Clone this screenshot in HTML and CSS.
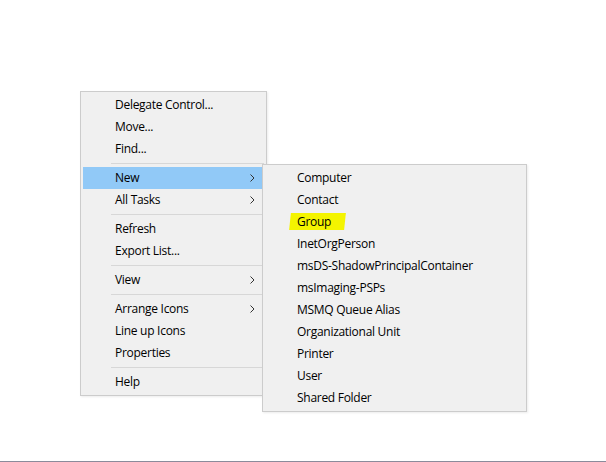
FILE: index.html
```html
<!DOCTYPE html>
<html>
<head>
<meta charset="utf-8">
<link rel="stylesheet" href="styles.css">
</head>
<body>
<div class="screen">
  <div class="menu main-menu">
    <div class="item">Delegate Control...</div>
    <div class="item">Move...</div>
    <div class="item">Find...</div>
    <div class="sep"></div>
    <div class="item active">New<svg class="chev" viewBox="0 0 5 8"><path d="M0.5 0.5 L4 4 L0.5 7.5" fill="none" stroke="#333" stroke-width="1"/></svg></div>
    <div class="item">All Tasks<svg class="chev" viewBox="0 0 5 8"><path d="M0.5 0.5 L4 4 L0.5 7.5" fill="none" stroke="#333" stroke-width="1"/></svg></div>
    <div class="sep"></div>
    <div class="item">Refresh</div>
    <div class="item">Export List...</div>
    <div class="sep"></div>
    <div class="item">View<svg class="chev" viewBox="0 0 5 8"><path d="M0.5 0.5 L4 4 L0.5 7.5" fill="none" stroke="#333" stroke-width="1"/></svg></div>
    <div class="sep"></div>
    <div class="item">Arrange Icons<svg class="chev" viewBox="0 0 5 8"><path d="M0.5 0.5 L4 4 L0.5 7.5" fill="none" stroke="#333" stroke-width="1"/></svg></div>
    <div class="item">Line up Icons</div>
    <div class="item">Properties</div>
    <div class="sep"></div>
    <div class="item">Help</div>
  </div>
  <div class="menu sub-menu">
    <div class="item">Computer</div>
    <div class="item">Contact</div>
    <div class="item"><span class="marked">Group</span></div>
    <div class="item">InetOrgPerson</div>
    <div class="item">msDS-ShadowPrincipalContainer</div>
    <div class="item">msImaging-PSPs</div>
    <div class="item">MSMQ Queue Alias</div>
    <div class="item">Organizational Unit</div>
    <div class="item">Printer</div>
    <div class="item">User</div>
    <div class="item">Shared Folder</div>
  </div>
</div>
</body>
</html>
```
FILE: styles.css
```css
html, body {
  margin: 0;
  padding: 0;
  background: #ffffff;
}
.screen {
  position: relative;
  width: 606px;
  height: 461px;
  border-bottom: 1px solid #8b8b9b;
  font-family: "Segoe UI", "Open Sans", "Noto Sans", sans-serif;
  font-size: 12px;
  letter-spacing: -0.28px;
  color: #000;
}
.menu {
  position: absolute;
  background: #f0f0f0;
  border: 1px solid #cccccc;
  padding: 2px;
  box-sizing: border-box;
  display: flex;
  flex-direction: column;
  box-shadow: 1px 1px 2px rgba(0,0,0,0.08);
}
.main-menu {
  left: 80px;
  top: 91px;
  width: 187px;
}
.sub-menu {
  left: 262px;
  top: 164px;
  width: 265px;
  z-index: 2;
}
.item {
  position: relative;
  height: 22px;
  line-height: 22px;
  padding-left: 32px;
  display: flex;
  align-items: center;
  white-space: nowrap;
}
.item.active {
  background: #91c9f7;
}
.chev {
  position: absolute;
  right: 9px;
  top: 7px;
  width: 5px;
  height: 8px;
}
.sep {
  height: 7px;
  margin-left: 28px;
  display: flex;
  align-items: center;
}
.sep::after {
  content: "";
  display: block;
  width: 100%;
  height: 1px;
  background: #d7d7d7;
}
.marked {
  position: relative;
  z-index: 0;
}
.marked::before {
  content: "";
  position: absolute;
  left: -7px;
  right: -14px;
  top: 2px;
  bottom: 3px;
  background: #f4f400;
  z-index: -1;
  transform: skewX(-6deg);
}
```
